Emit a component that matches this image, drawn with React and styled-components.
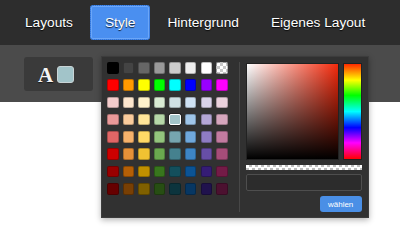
import React from "react";
import styled, { createGlobalStyle } from "styled-components";

const GlobalStyle = createGlobalStyle`
  html, body {
    margin: 0;
    padding: 0;
    background: #ffffff;
    font-family: "Liberation Sans", Helvetica, Arial, sans-serif;
  }
`;

const palette = [
  ["#000", "#444", "#666", "#999", "#ccc", "#eee", "#fff", "transparent"],
  ["#f00", "#f90", "#ff0", "#0f0", "#0ff", "#00f", "#90f", "#f0f"],
  ["#f4cccc", "#fce5cd", "#fff2cc", "#d9ead3", "#d0e0e3", "#cfe2f3", "#d9d2e9", "#ead1dc"],
  ["#ea9999", "#f9cb9c", "#ffe599", "#b6d7a8", "#a2c4c9", "#9fc5e8", "#b4a7d6", "#d5a6bd"],
  ["#e06666", "#f6b26b", "#ffd966", "#93c47d", "#76a5af", "#6fa8dc", "#8e7cc3", "#c27ba0"],
  ["#c00", "#e69138", "#f1c232", "#6aa84f", "#45818e", "#3d85c6", "#674ea7", "#a64d79"],
  ["#900", "#b45f06", "#bf9000", "#38761d", "#134f5c", "#0b5394", "#351c75", "#741b47"],
  ["#600", "#783f04", "#7f6000", "#274e13", "#0c343d", "#073763", "#20124d", "#4c1130"]
];

const selected = "#a2c4c9";

const tabs = ["Layouts", "Style", "Hintergrund", "Eigenes Layout"];

const App = () => {
  return (
    <Page>
      <GlobalStyle />
      <TopBar>
        {tabs.map((t) => (
          <Tab key={t} active={t === "Style"}>{t}</Tab>
        ))}
      </TopBar>
      <Band>
        <FontButton>
          <Letter>A</Letter>
          <ColorChip />
        </FontButton>
        <Popup>
          <PaletteGrid>
            {palette.flat().map((c, i) => (
              <Swatch
                key={i}
                color={c}
                checker={c === "transparent"}
                selected={c === selected}
              />
            ))}
          </PaletteGrid>
          <Divider />
          <Picker>
            <PickerTop>
              <SatBox />
              <HueBar />
            </PickerTop>
            <AlphaBar />
            <ColorInput />
            <ButtonRow>
              <ChooseButton>wählen</ChooseButton>
            </ButtonRow>
          </Picker>
        </Popup>
      </Band>
    </Page>
  );
};

const Page = styled.div`
  min-height: 250px;
  background: #ffffff;
`;

const TopBar = styled.div`
  height: 45px;
  background: #2d2d2d;
  display: flex;
  align-items: center;
  gap: 2px;
  padding-left: 10px;
  box-sizing: border-box;
`;

const Tab = styled.div`
  height: 35px;
  display: flex;
  align-items: center;
  padding: 0 14px;
  box-sizing: border-box;
  white-space: nowrap;
  border-radius: 3px;
  color: #ffffff;
  font-size: 13.7px;
  text-shadow: 0 1px 1px rgba(0, 0, 0, 0.8);
  background: ${(p) => (p.active ? "#4a8ff0" : "transparent")};
  border: 1px dotted ${(p) => (p.active ? "#2f6fcf" : "transparent")};
  box-shadow: ${(p) => (p.active ? "inset 0 0 0 1px rgba(140, 190, 255, 0.5)" : "none")};
`;

const Band = styled.div`
  position: relative;
  height: 57px;
  background: #4b4b4b;
  padding: 12px 0 0 24px;
  box-sizing: border-box;
`;

const FontButton = styled.div`
  width: 69px;
  height: 34px;
  background: #3a3a3a;
  border-radius: 3px;
  display: flex;
  align-items: center;
  padding-left: 14px;
  gap: 4px;
  box-sizing: border-box;
`;

const Letter = styled.span`
  font-family: "Liberation Serif", "Times New Roman", serif;
  font-weight: bold;
  font-size: 21px;
  color: #f4f4f4;
  text-shadow: 0 1px 1px rgba(0, 0, 0, 0.6);
  line-height: 1;
  margin-top: 2px;
`;

const ColorChip = styled.div`
  width: 17px;
  height: 17px;
  border-radius: 3px;
  background: ${selected};
  border: 1px solid #c9d4d6;
  box-sizing: border-box;
`;

const Popup = styled.div`
  position: absolute;
  left: 101px;
  top: 11px;
  width: 268px;
  box-sizing: border-box;
  background: #313131;
  border: 1px solid #3c3c3c;
  padding: 5px;
  display: flex;
  box-shadow: 0 2px 6px rgba(0, 0, 0, 0.3);
  z-index: 2;
`;

const PaletteGrid = styled.div`
  display: grid;
  grid-template-columns: repeat(8, 11.5px);
  grid-auto-rows: 11.5px;
  column-gap: 4.1px;
  row-gap: 5.8px;
  align-self: flex-start;
`;

const Swatch = styled.div`
  border-radius: 2px;
  box-sizing: border-box;
  background: ${(p) =>
    p.checker
      ? "repeating-conic-gradient(#c8c8c8 0% 25%, #ffffff 0% 50%) 0 0 / 6px 6px"
      : p.color};
  border: ${(p) => (p.selected ? "1.5px solid #ffffff" : "1px solid rgba(0, 0, 0, 0.25)")};
  box-shadow: ${(p) => (p.selected ? "0 0 0 1px #222" : "none")};
`;

const Divider = styled.div`
  width: 1px;
  background: #474747;
  margin: 0 6px 0 11px;
`;

const Picker = styled.div`
  width: 116px;
  display: flex;
  flex-direction: column;
  padding-top: 1px;
`;

const PickerTop = styled.div`
  display: flex;
  gap: 4px;
  height: 97px;
`;

const SatBox = styled.div`
  flex: 1;
  border: 1px solid #222;
  box-sizing: border-box;
  background:
    linear-gradient(to bottom, rgba(0, 0, 0, 0), #000),
    linear-gradient(to right, #fff, rgba(255, 255, 255, 0)),
    #f42a0c;
`;

const HueBar = styled.div`
  width: 19px;
  border: 1px solid #222;
  box-sizing: border-box;
  background: linear-gradient(
    to bottom,
    #ff2a00 0%,
    #ffff00 17%,
    #00ff00 33%,
    #00ffff 50%,
    #0000ff 67%,
    #ff00ff 83%,
    #ff0000 100%
  );
`;

const AlphaBar = styled.div`
  height: 5px;
  margin-top: 5px;
  background: repeating-conic-gradient(#bdbdbd 0% 25%, #ffffff 0% 50%) 0 0 / 6px 5px;
`;

const ColorInput = styled.div`
  height: 17px;
  margin-top: 4px;
  border: 1px solid #4e4e4e;
  border-radius: 2px;
  background: #2c2c2c;
  box-sizing: border-box;
`;

const ButtonRow = styled.div`
  display: flex;
  justify-content: flex-end;
  margin-top: 5px;
`;

const ChooseButton = styled.div`
  width: 42px;
  height: 16px;
  border-radius: 3px;
  background: #4a8fe6;
  color: #ffffff;
  font-size: 8px;
  display: flex;
  align-items: center;
  justify-content: center;
`;

export default App;
